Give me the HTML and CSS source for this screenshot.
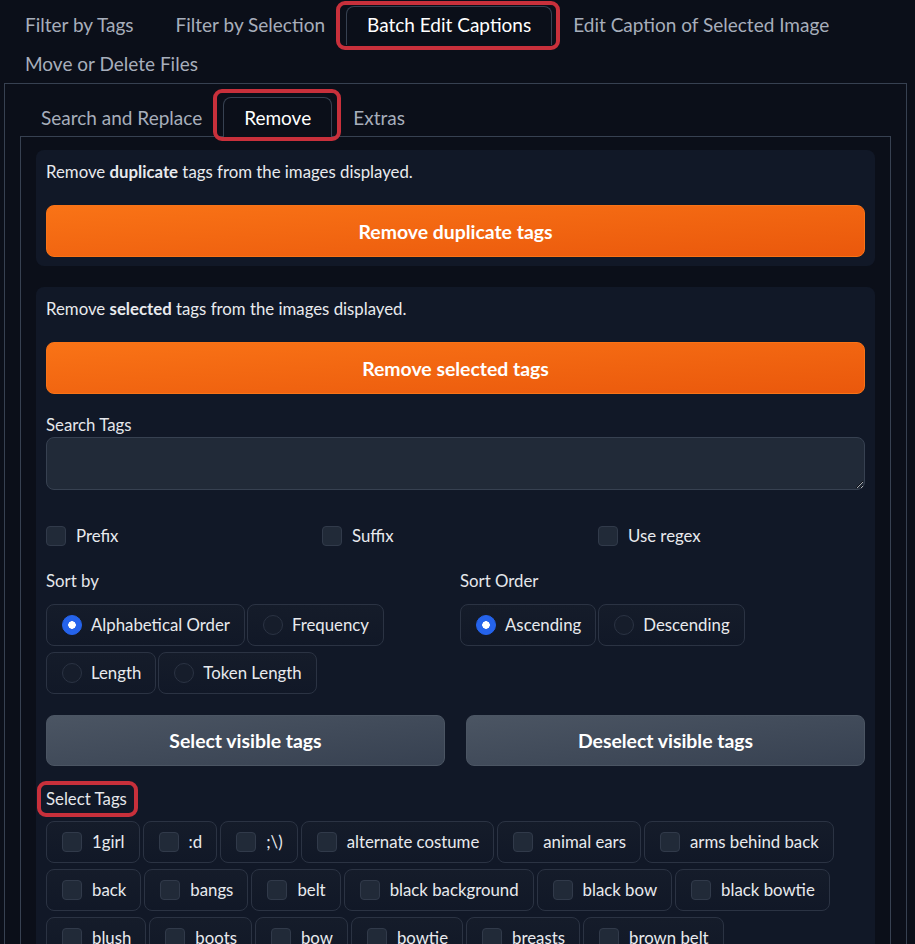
FILE: index.html
```html
<!DOCTYPE html>
<html lang="en">
<head>
<meta charset="utf-8">
<title>Batch Edit Captions</title>
<link rel="stylesheet" href="styles.css">
</head>
<body>
<div class="tab-nav top-nav">
  <button class="tab">Filter by Tags</button>
  <button class="tab">Filter by Selection</button>
  <button class="tab selected mark mark-top">Batch Edit Captions</button>
  <button class="tab">Edit Caption of Selected Image</button>
  <button class="tab">Move or Delete Files</button>
</div>
<div class="panel outer">
  <div class="tab-nav inner-nav">
    <button class="tab">Search and Replace</button>
    <button class="tab selected mark mark-remove">Remove</button>
    <button class="tab">Extras</button>
  </div>
  <div class="panel inner">
    <div class="block block-dup">
      <p class="md">Remove <strong>duplicate</strong> tags from the images displayed.</p>
      <button class="btn primary">Remove duplicate tags</button>
    </div>
    <div class="block block-sel">
      <p class="md">Remove <strong>selected</strong> tags from the images displayed.</p>
      <button class="btn primary">Remove selected tags</button>
      <label class="label search-label">Search Tags</label>
      <textarea class="textbox" rows="2"></textarea>
      <div class="check-row">
        <label class="check"><span class="box"></span>Prefix</label>
        <label class="check"><span class="box"></span>Suffix</label>
        <label class="check"><span class="box"></span>Use regex</label>
      </div>
      <div class="sort-row">
        <div class="sort-col">
          <div class="label">Sort by</div>
          <div class="options">
            <span class="pill"><span class="radio on"></span>Alphabetical Order</span>
            <span class="pill"><span class="radio"></span>Frequency</span>
            <span class="pill"><span class="radio"></span>Length</span>
            <span class="pill"><span class="radio"></span>Token Length</span>
          </div>
        </div>
        <div class="sort-col">
          <div class="label">Sort Order</div>
          <div class="options">
            <span class="pill"><span class="radio on"></span>Ascending</span>
            <span class="pill"><span class="radio"></span>Descending</span>
          </div>
        </div>
      </div>
      <div class="btn-row">
        <button class="btn secondary">Select visible tags</button>
        <button class="btn secondary">Deselect visible tags</button>
      </div>
      <div class="label tags-label"><span class="mark mark-tags">Select Tags</span></div>
      <div class="options tags">
        <span class="pill"><span class="box"></span>1girl</span>
        <span class="pill"><span class="box"></span>:d</span>
        <span class="pill"><span class="box"></span>;\)</span>
        <span class="pill"><span class="box"></span>alternate costume</span>
        <span class="pill"><span class="box"></span>animal ears</span>
        <span class="pill"><span class="box"></span>arms behind back</span>
        <span class="pill"><span class="box"></span>back</span>
        <span class="pill"><span class="box"></span>bangs</span>
        <span class="pill"><span class="box"></span>belt</span>
        <span class="pill"><span class="box"></span>black background</span>
        <span class="pill"><span class="box"></span>black bow</span>
        <span class="pill"><span class="box"></span>black bowtie</span>
        <span class="pill"><span class="box"></span>blush</span>
        <span class="pill"><span class="box"></span>boots</span>
        <span class="pill"><span class="box"></span>bow</span>
        <span class="pill"><span class="box"></span>bowtie</span>
        <span class="pill"><span class="box"></span>breasts</span>
        <span class="pill"><span class="box"></span>brown belt</span>
      </div>
    </div>
  </div>
</div>
</body>
</html>
```
FILE: styles.css
```css
* { box-sizing: border-box; }
html, body {
  margin: 0;
  background: #0b0f19;
  color: #e8eaee;
  font-family: Lato, "Noto Sans", "Liberation Sans", sans-serif;
  font-size: 16.8px;
  color-scheme: dark;
}
body { overflow: hidden; height: 944px; }

.tab-nav {
  display: flex;
  flex-wrap: wrap;
}
.top-nav {
  padding: 6px 0 0 4px;
  width: 912px;
}
.tab {
  position: relative;
  height: 39px;
  padding: 0 20px;
  background: transparent;
  border: 1px solid transparent;
  border-bottom: none;
  border-radius: 8px 8px 0 0;
  color: #a7aebb;
  font-family: inherit;
  font-size: 19px;
  line-height: 1;
  cursor: pointer;
}
.top-nav .tab { padding-bottom: 4px; }
.tab.selected {
  border-color: #374151;
  background: #0b0f19;
  color: #ffffff;
}

.mark { position: relative; }
.mark::after {
  content: "";
  position: absolute;
  border: 4px solid #c8303b;
  border-radius: 9px;
  pointer-events: none;
}
.mark-top::after { top: -6px; left: -11px; right: -9px; bottom: -5px; }
.mark-remove::after { top: -9px; left: -11px; right: -10px; bottom: -4px; }
.mark-tags::after { top: -7px; left: -9px; right: -11px; bottom: -8px; }

.panel { border: 1px solid #374151; }
.outer {
  margin: -1px 0 0 4px;
  width: 903px;
  height: 900px;
  border-bottom: none;
  padding: 13px 15px 0;
}
.inner-nav { position: relative; z-index: 1; margin-bottom: -1px; }
.inner-nav .tab { height: 40px; }
.inner {
  height: 820px;
  border-bottom: none;
  padding: 13px 15px 0;
}

.block {
  background: #111827;
  border-radius: 8px;
  padding: 11px 10px 9px;
  display: flex;
  flex-direction: column;
}
.block-sel { margin-top: 21px; padding-bottom: 20px; }
.md { margin: 0; line-height: 22px; }
.md strong { font-weight: 700; }

.btn {
  border-radius: 8px;
  font-family: inherit;
  font-size: 19.4px;
  font-weight: 700;
  color: #ffffff;
  cursor: pointer;
}
.primary {
  height: 52px;
  margin-top: 22px;
  border: 1px solid #f97316;
  background: linear-gradient(to bottom right, #f97316, #ea580c);
}
.secondary {
  height: 51px;
  border: 1px solid #4b5563;
  background: linear-gradient(to bottom right, #4b5563, #374151);
}

.label { line-height: 20px; color: #e5e7eb; }
.search-label { margin-top: 21px; margin-bottom: 2px; }
.textbox {
  height: 53px;
  width: 100%;
  background: #212a38;
  border: 1px solid #374151;
  border-radius: 8px;
  resize: vertical;
  color: #e5e7eb;
  font-family: inherit;
  font-size: 16px;
  display: block;
}

.box {
  display: inline-block;
  flex: none;
  width: 20px;
  height: 20px;
  border-radius: 4px;
  background: #212a38;
  border: 1px solid #313a4a;
}
.check-row {
  margin-top: 36px;
  display: grid;
  grid-template-columns: repeat(3, 1fr);
  column-gap: 9px;
}
.check {
  display: flex;
  align-items: center;
  gap: 10px;
  height: 20px;
  line-height: 20px;
}

.sort-row {
  margin-top: 25px;
  display: grid;
  grid-template-columns: 1fr 1fr;
  column-gap: 9px;
}
.options {
  margin-top: 13px;
  display: flex;
  flex-wrap: wrap;
  gap: 6px 2px;
}
.sort-col .options { width: 345px; }
.pill {
  display: inline-flex;
  align-items: center;
  gap: 9px;
  height: 42px;
  padding: 0 14px 0 15px;
  border: 1px solid #2b3343;
  border-radius: 8px;
  background: linear-gradient(to bottom, #151c2a, #111827);
  line-height: 20px;
}
.radio {
  display: inline-block;
  flex: none;
  width: 20px;
  height: 20px;
  border-radius: 50%;
  background: #161d2b;
  border: 1px solid #2b3343;
}
.radio.on {
  background: #2563eb radial-gradient(circle, #ffffff 0 3.5px, transparent 4px);
  border-color: #2563eb;
}

.btn-row {
  margin-top: 21px;
  display: grid;
  grid-template-columns: 1fr 1fr;
  column-gap: 21px;
}
.tags-label { margin-top: 23px; }
.tags { margin-top: 12px; gap: 6px 3px; }
.tags .pill { gap: 10px; }
```
